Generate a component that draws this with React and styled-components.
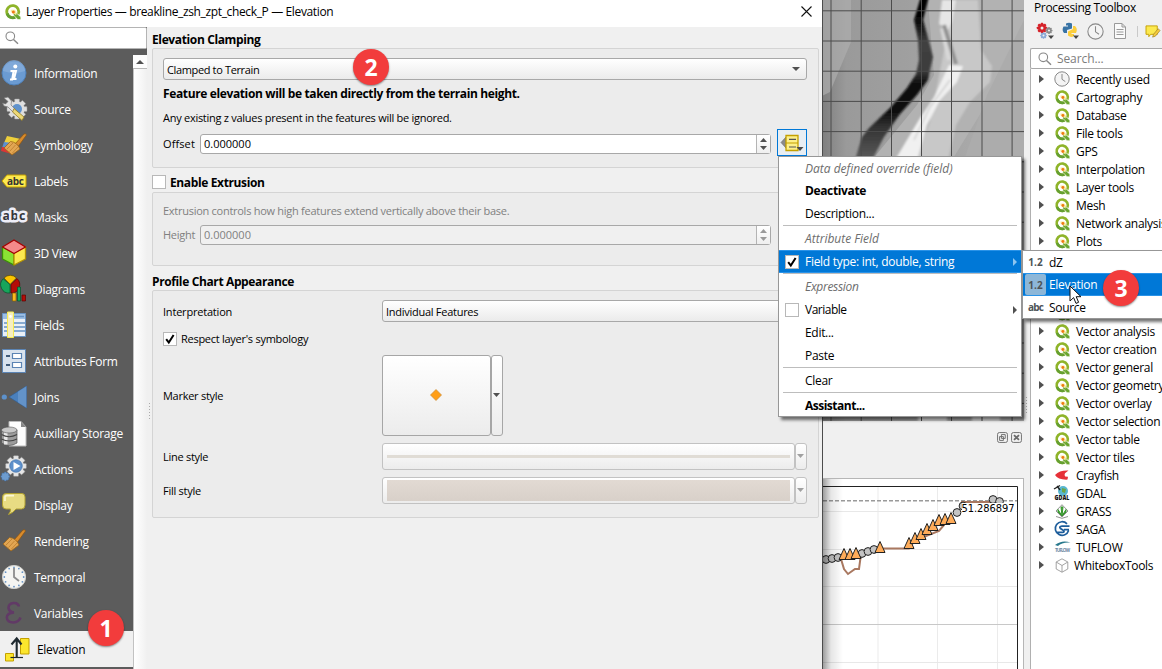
import React from "react";
import styled, { createGlobalStyle, css } from "styled-components";

const Global = createGlobalStyle`
  * { box-sizing: border-box; }
  body { margin: 0; overflow: hidden; background: #f0f0f0; }
  svg { flex: none; overflow: visible; }
`;

const Screen = styled.div`
  position: relative;
  display: flex;
  width: 1162px;
  height: 669px;
  overflow: hidden;
  background: #f0f0f0;
  color: #000;
  font: 12px/16px "Open Sans", "Noto Sans", sans-serif;
  white-space: nowrap;
`;

const Text = styled.span`
  display: block;
  flex: none;
  padding-top: ${(p) => p.$pt ?? 2}px;
  letter-spacing: ${(p) => p.$ls ?? -0.3}px;
  font-weight: ${(p) => (p.$bold ? 700 : 400)};
  font-style: ${(p) => (p.$italic ? "italic" : "normal")};
  color: ${(p) => p.$color || "inherit"};
`;
const TitleText = styled(Text)`
  padding-top: 0;
`;
const Heading = styled(Text)`
  font-weight: 700;
  letter-spacing: ${(p) => p.$ls ?? -0.37}px;
`;
const FormText = styled(Text)`
  width: ${(p) => (p.$w ? `${p.$w}px` : "auto")};
  padding-top: ${(p) => p.$pt ?? 1}px;
  font-size: 11px;
  letter-spacing: ${(p) => p.$ls ?? -0.27}px;
`;

/* ---------- dialog ---------- */
const Dialog = styled.section`
  display: flex;
  flex-direction: column;
  width: 823px;
  flex: none;
  border-right: 1px solid #4c4c4c;
`;
const TitleBar = styled.header`
  display: flex;
  align-items: center;
  height: 27px;
  flex: none;
  padding: 0 10px 4px 5px;
  background: #fff;
  gap: 5px;
`;
const Spacer = styled.div`flex: 1;`;
const DialogBody = styled.div`
  display: flex;
  flex: 1;
  min-height: 0;
`;
const Sidebar = styled.nav`
  display: flex;
  flex-direction: column;
  width: 147px;
  flex: none;
  background: #5c5c5c;
`;
const SideSearch = styled.div`
  display: flex;
  align-items: center;
  height: 22px;
  margin-bottom: 6px;
  padding-left: 5px;
  background: #fff;
  border: 1px solid #b4b4b4;
  border-left: 0;
  border-radius: 0 2px 2px 0;
`;
const SideMain = styled.div`
  display: flex;
  flex: 1;
`;
const SideList = styled.div`
  width: 133px;
  color: #fff;
`;
const SideItem = styled.div`
  display: flex;
  align-items: center;
  height: 36px;
  gap: ${(p) => (p.$active ? 7 : 6)}px;
  padding-left: ${(p) => (p.$active ? 2 : 0)}px;
  ${(p) => p.$active && css`background: #f0f0f0; color: #000;`}
`;
const ScrollTrack = styled.div`
  width: 14px;
  background: linear-gradient(90deg, #c2c2c2 0 1px, #fff 1px, #fbfbfb 5px, #f0f0f0 14px);
`;
const ScrollUp = styled.div`
  display: grid;
  place-items: center;
  height: 14px;
  background: #fdfdfd;
  border-bottom: 1px solid #b8b8b8;
`;
const Splitter = styled.div`
  align-self: flex-start;
  width: ${(p) => p.$w || 5}px;
  flex: none;
  height: 18px;
  margin-top: ${(p) => p.$top}px;
  background: radial-gradient(circle, #aaa 0.6px, transparent 1px) 0 0 / 5px 3px repeat-y;
`;
const Content = styled.main`
  display: flex;
  flex-direction: column;
  flex: 1;
  min-width: 0;
  padding-right: 3px;
`;
const GroupTitle = styled.div`
  display: flex;
  align-items: center;
  gap: 4px;
  height: ${(p) => p.$h}px;
  padding-top: ${(p) => p.$pt || 0}px;
`;
const Group = styled.div`
  height: ${(p) => p.$h}px;
  padding: 9px 11px 0 10px;
  background: #ececec;
  border: 1px solid #d4d4d4;
  border-radius: 2px;
  color: ${(p) => (p.$disabled ? "#808080" : "#000")};
`;
const Line = styled.div`
  display: flex;
  align-items: center;
  height: ${(p) => p.$h}px;
  gap: ${(p) => p.$gap ?? 5}px;
`;
const FormRow = styled.div`
  display: grid;
  grid-template-columns: 219px 1fr;
  align-items: center;
  margin-bottom: ${(p) => p.$mb || 0}px;
`;
const Combo = styled.div`
  display: flex;
  align-items: center;
  justify-content: space-between;
  height: 22px;
  padding: 0 6px 0 3px;
  background: linear-gradient(#fff, #ebebeb);
  border: 1px solid #a8a8a8;
  border-radius: 3px;
`;
const Spin = styled.div`
  display: flex;
  align-items: stretch;
  width: 571px;
  height: 20px;
  background: ${(p) => (p.$disabled ? "#f0f0f0" : "#fff")};
  border: 1px solid #a8a8a8;
  border-radius: 3px;
`;
const SpinValue = styled.div`
  display: flex;
  align-items: center;
  flex: 1;
  padding-left: 3px;
`;
const SpinButtons = styled.div`
  display: flex;
  flex-direction: column;
  align-items: center;
  justify-content: center;
  gap: 4px;
  width: 14px;
  border-left: 1px solid #b4b4b4;
  background: linear-gradient(#fff, #efefef);
`;
const OverrideButton = styled.div`
  display: grid;
  place-items: center;
  width: 30px;
  height: 27px;
  margin: -2px 0 0 1px;
  border: 1px solid #0078d7;
  background: #e8eef3;
`;
const Check = styled.span`
  display: grid;
  place-items: center;
  width: 14px;
  height: 14px;
  flex: none;
  background: #fff;
  border: 1px solid #b8b8b8;
`;
const SplitButton = styled.div`
  display: flex;
  height: ${(p) => p.$h}px;
`;
const ButtonFace = styled.div`
  display: flex;
  align-items: center;
  justify-content: center;
  width: ${(p) => p.$w}px;
  padding: ${(p) => (p.$pad ? "2px 4px" : "0 1px 1px 0")};
  border: 1px solid ${(p) => (p.$disabled ? "#c2c2c2" : "#a6a6a6")};
  border-radius: 3px;
  background: linear-gradient(#fff, #ececec);
`;
const Swatch = styled.div`
  width: 100%;
  height: ${(p) => p.$h}px;
  background: ${(p) => (p.$h > 4 ? "linear-gradient(#e2dad3, #d8d0c9)" : "#e0dcd5")};
`;

/* ---------- small glyphs ---------- */
const Tri = ({ dir = "down", color = "#505050", w = 8, h = 4 }) => {
  const d = { down: `M0 0H${w}L${w / 2} ${h}Z`, up: `M0 ${h}H${w}L${w / 2} 0Z`, right: `M0 0V${h}L${w} ${h / 2}Z` }[dir];
  return <svg width={w} height={h} display="block"><path d={d} fill={color} /></svg>;
};
const Tick = () => (
  <svg width="12" height="12" viewBox="0 0 12 12"><path d="M2.2 6.2 4.8 9.6 9.6 2" fill="none" stroke="#000" strokeWidth="2" /></svg>
);
const Magnifier = ({ color = "#888" }) => (
  <svg width="14" height="14" viewBox="0 0 14 14" fill="none" stroke={color} strokeWidth="1.1"><circle cx="5.3" cy="5.3" r="4.3" /><path d="M8.5 8.5 13 12.8" strokeWidth="1.5" /></svg>
);
const QLogo = ({ size = 15 }) => (
  <svg width={size} height={size} viewBox="0 0 16 16">
    <path d="M10.6 12.9A6 6 0 1 1 13.1 10.3" fill="none" stroke="#8fb42a" strokeWidth="2.8" />
    <path d="M2.2 9.5A6 6 0 0 0 10 13.4" fill="none" stroke="#649f31" strokeWidth="2.8" />
    <path d="M8.4 8.4H10.8L15.8 13V15.6H12.8L8.4 11Z" fill="#6aa52f" stroke="#fff" strokeWidth=".6" />
    <path d="M5.8 5.8H9.8L11.4 7.6V11.2L5.8 8Z" fill="#faeaa0" />
    <circle cx="8.4" cy="8" r="1.5" fill="#ee7913" />
  </svg>
);
const Gear = ({ x, y, r, fill, stroke }) => (
  <g transform={`translate(${x} ${y})`}>
    {[0, 45, 90, 135].map((a) => <rect key={a} x={-r * 0.24} y={-r} width={r * 0.48} height={2 * r} rx=".6" transform={`rotate(${a})`} fill={fill} stroke={stroke} strokeWidth=".5" />)}
    <circle r={r * 0.76} fill={fill} />
  </g>
);
const Clock = ({ size = 16 }) => (
  <svg width={size} height={size} viewBox="0 0 16 16" fill="#f4f4f4" stroke="#888" strokeWidth="1"><circle cx="8" cy="8" r="7.2" /><path d="M8 3V8.3L11.3 10.6" fill="none" /></svg>
);

const Brush = ({ x = 0, y = 0 }) => (
  <g transform={`translate(${x} ${y})`}>
    <path d="M14 12 23 2Q25 1 25.5 3L17.5 14Z" fill="#d98b2c" stroke="#8a5310" strokeWidth=".7" />
    <path d="M9.5 9.5Q16 10 19 17L11 23 3 16Z" fill="#e2a653" stroke="#9c6518" strokeWidth=".8" />
    <path d="M6 17 12 11M8.5 19.5 14.5 13M11 21.5 17 15" stroke="#bb7b2b" strokeWidth=".8" />
  </g>
);
const sideIcons = {
  Information: <><circle cx="14" cy="14" r="12" fill="#6b9bd2" stroke="#4f80b8" /><path d="M3 12A11 11 0 0 1 25 12Q14 16 3 12Z" fill="#8db2dd" opacity=".6" /><circle cx="15.3" cy="7.6" r="2" fill="#fff" /><path d="M10.5 12H16L14 20H16.5M10 20.5H12.2L13.6 12" fill="none" stroke="#fff" strokeWidth="2" /></>,
  Source: <><Gear x={17} y={14} r={10} fill="#dedede" stroke="#999" /><circle cx="17" cy="14" r="5" fill="#5f92cc" /><path d="M4 3 8 2 11.5 6 11 10 17 16 14.5 18.5 8 12 4 11 2.5 8 5.5 9 8 6.5Z" fill="#e4e4e4" stroke="#777" strokeWidth=".7" /><path d="M14 13.5 24 22 22 25.5 12.5 17Z" fill="#ecd878" stroke="#8f7a25" strokeWidth=".8" /></>,
  Symbology: <><path d="M7 5 21 8 18 15 4 12Z" fill="#edcf3b" /><path d="M4 11 13 12 12 18 2 17Z" fill="#5b90cf" /><path d="M2 16 13 17 12 23 1 20Z" fill="#db3535" /><Brush y={1} x={1} /></>,
  Labels: <><path d="M2 14 7 8H25Q26 8 26 9V19Q26 20 25 20H7Z" fill="#fce94f" stroke="#c4a000" /><text x="7" y="17.6" fontFamily="Open Sans" fontSize="10" fontWeight="700" textLength="17" fill="#333">abc</text></>,
  Masks: <text x="2.5" y="17" fontFamily="Open Sans" fontSize="12.5" fontWeight="700" textLength="23" fill="#33363b" stroke="#eeeef8" strokeWidth="5" paintOrder="stroke" strokeLinejoin="round">abc</text>,
  "3D View": <g strokeWidth="1.3" strokeLinejoin="round"><path d="M2.5 8 14 14V26L2.5 20Z" fill="#8ae234" stroke="#3b9005" /><path d="M25.5 8 14 14V26L25.5 20Z" fill="#fce94f" stroke="#b59304" /><path d="M14 1 25.5 8 14 14.5 2.5 8Z" fill="#f48a8a" stroke="#a40000" /></g>,
  Diagrams: <g strokeWidth=".7"><path d="M10 9.5 4 3A8.6 8.6 0 0 1 16.5 3Z" fill="#fbc500" stroke="#574700" /><path d="M10 9.5V18A8.3 8.3 0 0 1 3.2 3.8Z" fill="#17a55b" stroke="#07502a" /><path d="M11 9.5 17 3.6A8.3 8.3 0 0 1 11 18Z" fill="#b50d08" stroke="#5c0502" /><path d="M12.5 18H16V26H12.5Z" fill="#fbb920" stroke="#8a6300" /><path d="M17.5 12H20.5V26H17.5Z" fill="#11a65e" stroke="#07502a" /><path d="M22 20H25.5V26H22Z" fill="#b50d08" stroke="#5c0502" /></g>,
  Fields: <><path d="M2.5 2.5H25.5V25.5H2.5Z" fill="#eaf0f7" stroke="#6793c4" /><path d="M3 3H25V8H3Z" fill="#9dbfe4" /><path d="M4 12H25M4 16H25M4 20H25M14 5.5H24" stroke="#6793c4" strokeWidth="1.4" /><path d="M7.5 1H13.5V26.5H7.5Z" fill="#f5eec0" stroke="#f5ea52" /><circle cx="10.5" cy="5.5" r="1.4" fill="#fff" /></>,
  "Attributes Form": <><path d="M2.5 2.5H25.5V25.5H2.5Z" fill="#d9e3ee" stroke="#5b84b4" /><path d="M12.5 6.5H21.5V11.5H12.5ZM12.5 15.5H21.5V20.5H12.5Z" fill="#fff" stroke="#5b84b4" strokeWidth="1.2" /><path d="M6 9H10M6 18H10" stroke="#425c7a" strokeWidth="2" /></>,
  Joins: <><path d="M9 14 26.5 3V25Z" fill="#4a80bd" stroke="#2f5d92" strokeWidth=".6" /><path d="M18 8.4 26.5 3V25L18 19.5Z" fill="#78a3d4" opacity=".55" /><circle cx="4.3" cy="14" r="2.6" fill="#5d91cb" /></>,
  "Auxiliary Storage": <><path d="M9 2.5H21L26 8V27H9Z" fill="#fdfdfd" stroke="#bbb" /><path d="M21 2.5V8H26Z" fill="#888" /><path d="M1.5 11V24Q9 29 17 24V11Z" fill="#9c9c9c" stroke="#555" strokeWidth=".7" /><path d="M4 12.5V25.5H7.5V12.5Z" fill="#e8e8e8" /><path d="M1.5 15.5Q9 20 17 15.5M1.5 20Q9 24 17 20" fill="none" stroke="#444" strokeWidth="1.2" /><ellipse cx="9.2" cy="11" rx="7.8" ry="3" fill="#c9c9c9" stroke="#555" strokeWidth=".6" /></>,
  Actions: <><Gear x={16} y={11} r={10.3} fill="#e6e6e6" stroke="#999" /><circle cx="16" cy="11" r="6.3" fill="#5d90cb" stroke="#3e6ea8" strokeWidth=".6" /><path d="M13.5 7V15L20.5 11Z" fill="#fff" /><Gear x={5.3} y={21.5} r={4.4} fill="#6d9ccf" stroke="#3e6ea8" /></>,
  Display: <><path d="M6 2.5H22Q25 2.5 25 6V14Q25 18 21.5 18H16Q13 22 8.5 23.5 11 20.5 10.5 18H6Q2.5 18 2.5 14V6Q2.5 2.5 6 2.5Z" fill="#e8dc83" stroke="#b0a030" /><path d="M5 10V6Q5 4.6 7 4.6H14" fill="none" stroke="#fbf7d5" strokeWidth="1.6" /></>,
  Rendering: <Brush y={1} />,
  Temporal: <><circle cx="14" cy="14" r="11.6" fill="#f5f5f2" stroke="#d0d0cc" />{[...Array(12)].map((_, i) => <circle key={i} cx={14 + 9.7 * Math.sin(i * 0.5236)} cy={14 + 9.7 * Math.cos(i * 0.5236)} r=".9" fill="#6793c4" />)}<path d="M14 5V14L19 18" fill="none" stroke="#8d8d8d" strokeWidth="1.8" /></>,
  Variables: <path d="M19 7.5Q18 3.5 13.5 4 8.5 4.5 8.5 9 9 13 14 13.5 7 14 6.8 18.5 7.2 23.5 13.5 23.5 19 23 20.5 18.5" fill="none" stroke="#613a66" strokeWidth="2.6" />,
  Elevation: <><path d="M3.5 18.5H11.5V26H3.5Z" fill="#fce62d" stroke="#c4a000" /><path d="M18.5 3.5H27V19H18.5Z" fill="#fce62d" stroke="#c4a000" /><path d="M8.5 22.5H21" stroke="#1f2a30" strokeWidth="1.2" /><path d="M14.7 22V4M9.5 9.5 14.7 3.5 19.5 9.5" fill="none" stroke="#1f2a30" strokeWidth="2.1" /></>,
};
const SideIcon = ({ name }) => <svg width="28" height="28" viewBox="0 0 28 28">{sideIcons[name]}</svg>;

const OverrideIcon = () => (
  <svg width="24" height="20" viewBox="0 0 24 20">
    <path d="M1 9.5 6 4V15Z" fill="#8a8a8a" stroke="#666" strokeWidth=".6" />
    <path d="M6 2.5H18V17.5H6Z" fill="#fdf08a" stroke="#c4a000" strokeWidth="1.3" /><path d="M6 10H18" stroke="#c4a000" />
    <path d="M9 6.3H16M9 14H16" stroke="#555" strokeWidth="1.2" />
    <path d="M16.5 14H23.5L20 18Z" fill="#4a4a4a" />
  </svg>
);

/* ---------- map and profile ---------- */
const MiddleColumn = styled.section`
  display: flex;
  flex-direction: column;
  width: 201px;
  flex: none;
`;
const MapBox = styled.div`
  height: 421px;
  overflow: hidden;
`;
const MapSvg = styled.svg`
  display: block;
  overflow: hidden;
`;
const DockTitle = styled.div`
  display: flex;
  justify-content: flex-end;
  gap: 3px;
  height: 57px;
  padding: 11px 2px 0 0;
`;
const PlotBox = styled.div`
  height: 191px;
  overflow: hidden;
  background: #fff;
  border: 1px solid #b6b6b6;
  border-width: 1px 1px 0 0;
`;
const gridX = [8.5, 38.7, 69, 99, 129, 159.5, 189.6];
const gridY = [...Array(14)].map((_, i) => 10.8 + i * 30.2);
const MapView = () => (
  <MapSvg width="201" height="421" viewBox="1 0 201 421">
    <defs>
      <filter id="soft" x="-20%" y="-20%" width="140%" height="140%"><feGaussianBlur stdDeviation="1.2" /></filter>
      <linearGradient id="land" x1="0" x2="1"><stop offset="0" stopColor="#7e7e7e" /><stop offset=".12" stopColor="#9a9a9a" /><stop offset=".45" stopColor="#a0a0a0" /><stop offset="1" stopColor="#b0b0b0" /></linearGradient>
      <linearGradient id="channel" gradientUnits="userSpaceOnUse" x1="0" y1="0" x2="0" y2="157">
        <stop offset="0" stopColor="#000" /><stop offset=".13" stopColor="#080808" /><stop offset=".27" stopColor="#404040" /><stop offset=".45" stopColor="#3c3c3c" />
        <stop offset=".53" stopColor="#101010" /><stop offset=".7" stopColor="#0a0a0a" /><stop offset=".8" stopColor="#303030" /><stop offset="1" stopColor="#585858" />
      </linearGradient>
    </defs>
    <rect width="202" height="421" fill="url(#land)" />
    <path d="M0 0H29V42L8 92 0 96Z" fill="#aeaeae" opacity=".7" />
    <path d="M106 0H202V40L170 95 130 160H50L95 105 112 75Z" fill="#b2b2b2" />
    <path d="M202 20 165 95 142 160H202Z" fill="#acacac" />
    <g filter="url(#soft)">
      <path d="M132 0H156L159 50 170 66 168 82 148 102 134 125 126 160H92L108 122Z" fill="#c8c8c8" />
      <path d="M120 0H134L130 22 126 30 117 24Z" fill="#e6e6e6" />
      <path d="M120 28 127 60" stroke="#d8d8d8" strokeWidth="4" />
      <path d="M122 25 134 64" stroke="#929292" strokeWidth="4" />
      <path d="M127 65 141 66 135 82 118 100 105 125 95 160H73L98 118 112 97Z" fill="#f0f0f0" />
      <path d="M128 80 108 107 92 140" stroke="#d0d0d0" strokeWidth="1.5" fill="none" />
      <path d="M99-4H107L101 20 108 45 111 57 108 70 106 80 95 95 78 114 62 137 50 160H33L40 137 47 128 68 108 85 88 94 74 97 60 96 40 92 20Z" fill="url(#channel)" />
      <path d="M96 421V414H125V421ZM150 421V414H178V421Z" fill="#e8e8e8" />
    </g>
    {gridX.map((x) => <path key={x} d={`M${x + 0.5} 0V421`} stroke="#4c4c4c" />)}
    {gridY.map((y) => <path key={y} d={`M0 ${y}H202`} stroke="#4c4c4c" />)}
  </MapSvg>
);
const circles = [[3, 80.5], [9, 79.5], [15, 78.5], [39, 74.5], [45, 72.5], [51, 70.5], [134, 33.5], [140, 27], [170, 20.5], [176.5, 22.5]];
const triangles = [[21, 76], [27, 76], [33, 75], [57, 69], [86, 65], [92, 60], [98, 56], [104, 51], [110, 47], [116, 42], [122, 41], [128, 40]];
const Profile = () => (
  <svg width="200" height="190" display="block">
    <defs><linearGradient id="edge"><stop offset="0" stopColor="#000" stopOpacity=".38" /><stop offset=".4" stopColor="#000" stopOpacity=".1" /><stop offset="1" stopColor="#000" stopOpacity="0" /></linearGradient></defs>
    {[55, 114.5, 174.5].map((x) => <path key={x} d={`M${x} 8V190`} stroke="#ebebeb" />)}
    {[32.5, 70.5, 107.5, 183.5].map((y) => <path key={y} d={`M0 ${y}H194`} stroke="#e8e8e8" />)}
    <path d="M0 145.5H194" stroke="#c8c8c8" />
    <path d="M0 21.8H194" stroke="#9a9a9a" strokeWidth="1.4" strokeDasharray="4 2" />
    <path d="M0 7.5H194.5V190" fill="none" stroke="#222" />
    <path d="M18 80 21 90 25 95 32 90H36L38 75M57 69.5H86L92 61 103 57 116 52 121 46 122 41M138 23H170" fill="none" stroke="#a97860" strokeWidth="2" />
    {circles.map(([x, y]) => <circle key={x} cx={x} cy={y} r="3.9" fill="#c4c4c4" stroke="#222" />)}
    {triangles.map(([x, y]) => <path key={x} d={`M${x} ${y - 6.5}L${x + 5} ${y + 4.5}H${x - 5}Z`} fill="#ffac59" stroke="#222" />)}
    <path d="M139 24H193V36H139Z" fill="#fff" />
    <text x="138.5" y="33" fontFamily="DejaVu Sans Condensed, DejaVu Sans" fontSize="11" textLength="53" fill="#000">51.286897</text>
    <rect width="20" height="190" fill="url(#edge)" />
  </svg>
);
const DockButton = ({ close }) => (
  <svg width="11" height="11" viewBox="0 0 12 12" fill="none" stroke="#6a6a6a">
    <rect x=".6" y=".6" width="10.8" height="10.8" rx="2" />
    {close ? <path d="M3.3 3.3 8.7 8.7M8.7 3.3 3.3 8.7" strokeWidth="2" /> : <path d="M4.8 2.8H9V7H4.8ZM2.8 5H7V9.2H2.8Z" />}
  </svg>
);

/* ---------- toolbox ---------- */
const Toolbox = styled.aside`
  display: flex;
  flex-direction: column;
  flex: 1;
  min-width: 0;
  overflow: hidden;
`;
const ToolTitle = styled.div`
  height: 19px;
  padding: 0 4px;
  line-height: 15px;
`;
const ToolBar = styled.div`
  display: flex;
  align-items: center;
  height: 29px;
  padding: 0 0 5px 7px;
  gap: 8px;
`;
const ToolDivider = styled.i`
  width: 1px;
  height: 11px;
  flex: none;
  background: #c9c9c9;
`;
const ToolSearch = styled.div`
  display: flex;
  align-items: center;
  height: 21px;
  flex: none;
  gap: 5px;
  padding-left: 7px;
  background: #fff;
  border: 1px solid #a8a8a8;
  border-right: 0;
  border-radius: 2px 0 0 2px;
`;
const Tree = styled.div`
  flex: 1;
  padding-top: 1px;
  background: #fff;
  border-left: 1px solid #b0b0b0;
`;
const TreeRow = styled.div`
  display: flex;
  align-items: center;
  height: 18px;
  padding-left: 8px;
`;
const TreeIcon = styled.span`
  display: grid;
  place-items: center;
  width: 18px;
  margin: 0 ${(p) => (p.$tight ? 3 : 5)}px 0 9px;
  flex: none;
`;
const providerIcons = {
  clock: <Clock />,
  crayfish: <svg width="14" height="10" viewBox="0 0 14 10"><path d="M0 5Q5 0 13.5 .6L10 3.2Q9 5 10.2 6.5L13 6.8 12.5 9.6Q3 10 0 5Z" fill="#e63038" /></svg>,
  gdal: <svg width="16" height="16" viewBox="0 0 16 16"><circle cx="9" cy="6" r="5" fill="#59b7d0" /><path d="M8 3 12 4 11 8 8 7Z" fill="#6da544" /><path d="M0 4 6 .5M3 1 6 5" stroke="#222" strokeWidth="1.4" /><text x=".5" y="15" fontFamily="Open Sans" fontSize="7" fontWeight="800" textLength="15" lengthAdjust="spacingAndGlyphs" fill="#111">GDAL</text></svg>,
  grass: <svg width="14" height="15" viewBox="0 0 14 15"><path d="M7 .7 13 7 7 13 1 7ZM1 12.5 7 14.3 13 12.5" fill="none" stroke="#777" strokeWidth=".8" /><path d="M7 12 6 3H8ZM7 12 3 5.5V8ZM7 12 11 5.5V8Z" fill="#4bad3c" stroke="#35952c" strokeWidth="1" /></svg>,
  saga: <svg width="16" height="16" viewBox="0 0 16 16" fill="none" stroke="#1d5d9b" strokeWidth="1.7"><path d="M13 2.8A6.8 6.8 0 1 0 14.6 9.5M15.5 5.2H8Q4.5 5.6 6.5 7.6L9.5 9.4Q11 11.4 8.5 11.4H2.5M10 8.6H15" /></svg>,
  tuflow: <svg width="17" height="12" viewBox="0 0 17 12"><path d="M1 4Q8-1.5 16.5 1.5 8 .8 4 5Z" fill="#28788c" /><text x="1" y="10.5" fontFamily="Open Sans" fontSize="4.5" fontWeight="700" textLength="15" fill="#6b86a0">TUFLOW</text></svg>,
  whitebox: <svg width="14" height="15" viewBox="0 0 14 15" fill="none" stroke="#999" strokeWidth=".9"><path d="M7 .8 12.8 4V11L7 14.2 1.2 11V4ZM1.2 4 7 7.5 12.8 4M7 7.5V14.2" /></svg>,
};
const treeItems = [
  ["Recently used", "clock"], ["Cartography"], ["Database"], ["File tools"], ["GPS"], ["Interpolation"], ["Layer tools"], ["Mesh"], ["Network analysis"], ["Plots"],
  [""], [""], [""], [""],
  ["Vector analysis"], ["Vector creation"], ["Vector general"], ["Vector geometry"], ["Vector overlay"], ["Vector selection"], ["Vector table"], ["Vector tiles"],
  ["Crayfish", "crayfish"], ["GDAL", "gdal"], ["GRASS", "grass"], ["SAGA", "saga"], ["TUFLOW", "tuflow"], ["WhiteboxTools", "whitebox"],
];

/* ---------- menus and overlays ---------- */
const Menu = styled.div`
  position: absolute;
  left: ${(p) => p.$x}px;
  top: ${(p) => p.$y}px;
  width: ${(p) => p.$w}px;
  background: #fff;
  border: 1px solid #979797;
  box-shadow: 3px 3px 3px rgba(0, 0, 0, 0.55);
`;
const MenuRow = styled.div`
  display: flex;
  align-items: center;
  height: ${(p) => p.$h || 23}px;
  padding: 0 4px 0 6px;
  ${(p) => p.$active && css`background: #0078d7; color: #fff; box-shadow: inset 0 1px #2a93e8, inset 0 -1px #2a93e8;`}
`;
const MenuMark = styled.span`
  width: 20px;
  flex: none;
`;
const MenuSep = styled.div`
  height: 2px;
  margin: 0 4px;
  border-top: 1px solid #bdbdbd;
`;
const SubRow = styled(MenuRow)`
  padding: 0 0 0 2px;
`;
const TypeMark = styled.span`
  display: grid;
  place-items: center;
  width: 21px;
  height: 21px;
  margin-right: 3px;
  border-radius: 2px;
  font-size: 10px;
  font-weight: 700;
  letter-spacing: ${(p) => p.$ls || 0}px;
  color: #4d5357;
  background: ${(p) => (p.$active ? "#8db7d8" : "transparent")};
`;
const Badge = styled.div`
  position: absolute;
  left: ${(p) => p.$x}px;
  top: ${(p) => p.$y}px;
  display: grid;
  place-items: center;
  width: 36px;
  height: 36px;
  border-radius: 50%;
  background: #f23c3c;
  color: #fff;
  font: 700 23px/30px "Open Sans", sans-serif;
  box-shadow: 0 1px 2px rgba(0, 0, 0, 0.45);
`;
const Pointer = styled.svg`
  position: absolute;
  left: 1069px;
  top: 285px;
`;

const SpinBox = ({ disabled }) => (
  <Spin $disabled={disabled}>
    <SpinValue><FormText $pt={disabled ? 0 : 1} $ls={0}>0.000000</FormText></SpinValue>
    <SpinButtons><Tri dir="up" w={7} color={disabled ? "#9a9a9a" : "#505050"} /><Tri w={7} color={disabled ? "#9a9a9a" : "#505050"} /></SpinButtons>
  </Spin>
);

export default function App() {
  return (
    <Screen>
      <Global />
      <Dialog>
        <TitleBar>
          <QLogo size={16} />
          <TitleText $ls={-0.36}>Layer Properties — breakline_zsh_zpt_check_P — Elevation</TitleText>
          <Spacer />
          <svg width="11" height="11" viewBox="0 0 11 11"><path d="M.5.5 10.5 10.5M10.5.5.5 10.5" stroke="#111" strokeWidth="1.1" /></svg>
        </TitleBar>
        <DialogBody>
          <Sidebar>
            <SideSearch><Magnifier /></SideSearch>
            <SideMain>
              <SideList>
                {Object.keys(sideIcons).map((name) => (
                  <SideItem key={name} $active={name === "Elevation"}>
                    <SideIcon name={name} /><Text>{name}</Text>
                  </SideItem>
                ))}
              </SideList>
              <ScrollTrack><ScrollUp><Tri dir="up" /></ScrollUp></ScrollTrack>
            </SideMain>
          </Sidebar>
          <Splitter $top={375} />
          <Content>
            <GroupTitle $h={21} $pt={3}><Heading>Elevation Clamping</Heading></GroupTitle>
            <Group $h={120}>
              <Combo><FormText $pt={2} $ls={-0.36}>Clamped to Terrain</FormText><Tri /></Combo>
              <Line $h={26}><Heading>Feature elevation will be taken directly from the terrain height.</Heading></Line>
              <Line $h={24}><FormText $pt={0}>Any existing z values present in the features will be ignored.</FormText></Line>
              <Line $h={27}><FormText $w={32} $ls={0.1}>Offset</FormText><SpinBox /><OverrideButton><OverrideIcon /></OverrideButton></Line>
            </Group>
            <GroupTitle $h={24} $pt={4}><Check /><Heading>Enable Extrusion</Heading></GroupTitle>
            <Group $h={74} $disabled>
              <Line $h={17}><FormText $pt={0}>Extrusion controls how high features extend vertically above their base.</FormText></Line>
              <Line $h={32}><FormText $pt={0} $w={32}>Height</FormText><SpinBox disabled /></Line>
            </Group>
            <GroupTitle $h={24} $pt={6}><Heading>Profile Chart Appearance</Heading></GroupTitle>
            <Group $h={228}>
              <FormRow $mb={5}><FormText $pt={2} $ls={-0.2}>Interpretation</FormText><Combo><FormText $pt={2}>Individual Features</FormText><Tri /></Combo></FormRow>
              <Line $h={24} $gap={4}><Check><Tick /></Check><FormText $pt={0}>Respect layer's symbology</FormText></Line>
              <Line $h={4} />
              <FormRow $mb={7}>
                <FormText>Marker style</FormText>
                <SplitButton $h={81}>
                  <ButtonFace $w={109}><svg width="12" height="12"><path d="M6 .5 11.5 6 6 11.5.5 6Z" fill="#ff9e17" stroke="#c98a35" strokeWidth=".7" /></svg></ButtonFace>
                  <ButtonFace $w={12}><Tri w={7} /></ButtonFace>
                </SplitButton>
              </FormRow>
              <FormRow $mb={7}>
                <FormText>Line style</FormText>
                <SplitButton $h={27}><ButtonFace $w={413} $pad $disabled><Swatch $h={3} /></ButtonFace><ButtonFace $w={12} $disabled><Tri w={7} color="#a0a0a0" /></ButtonFace></SplitButton>
              </FormRow>
              <FormRow>
                <FormText>Fill style</FormText>
                <SplitButton $h={27}><ButtonFace $w={413} $pad $disabled><Swatch $h={21} /></ButtonFace><ButtonFace $w={12} $disabled><Tri w={7} color="#a0a0a0" /></ButtonFace></SplitButton>
              </FormRow>
            </Group>
          </Content>
        </DialogBody>
      </Dialog>

      <MiddleColumn>
        <MapBox><MapView /></MapBox>
        <DockTitle><DockButton /><DockButton close /></DockTitle>
        <PlotBox><Profile /></PlotBox>
      </MiddleColumn>
      <Splitter $top={396} $w={6} />

      <Toolbox>
        <ToolTitle><TitleText $ls={-0.35}>Processing Toolbox</TitleText></ToolTitle>
        <ToolBar>
          <svg width="17" height="18" viewBox="1 0 17 18"><Gear x={6} y={6} r={5.2} fill="#d5222a" /><circle cx="6" cy="6" r="1.5" fill="#f0f0f0" /><Gear x={13} y={8.5} r={3.5} fill="#8b8b8b" /><circle cx="13" cy="8.5" r="1" fill="#f0f0f0" /><Gear x={7.5} y={13.5} r={3.3} fill="#8aa9d6" /><circle cx="7.5" cy="13.5" r="1" fill="#f0f0f0" /><path d="M12 13.5H18L15 17Z" fill="#444" /></svg>
          <svg width="17" height="18" viewBox="0 0 17 18"><path d="M4 1.5Q7 0 10 1.5V6.5L5 8V11H2Q-.5 8 1.5 4.5H6V3.5H4Z" fill="#3873a5" /><path d="M6 13.5V9.5L11 7V4H13Q16 6.5 14 11H9.5V12H12V14Q9 16 6 13.5Z" fill="#fbce3e" /><path d="M11 13.5H17L14 17Z" fill="#444" /></svg>
          <Clock size={17} />
          <svg width="17" height="16" viewBox="0 0 17 16" fill="#fafafa" stroke="#999"><path d="M2.5.5H10L13.5 4V15.5H2.5ZM10 .5V4H13.5" /><path d="M4.5 6.5H11.5M4.5 9H11.5M4.5 11.5H11.5" /></svg>
          <ToolDivider />
          <svg width="15" height="15" viewBox="1 0 16 16"><path d="M1 2H13V11H6L4 13.5V11H1Z" fill="#fce94f" stroke="#c4a000" /><path d="M8 14 9 11 14 5 16 7 11 13Z" fill="#f5c93c" stroke="#8a7320" strokeWidth=".6" /></svg>
        </ToolBar>
        <ToolSearch><Magnifier /><Text $color="#7d7d7d" $ls={-0.1} $pt={1}>Search...</Text></ToolSearch>
        <Tree>
          {treeItems.map(([name, icon], i) => (
            <TreeRow key={i}>
              <Tri dir="right" w={5} h={8} />
              <TreeIcon $tight={icon === "whitebox"}>{icon ? providerIcons[icon] : <QLogo />}</TreeIcon>
              <Text>{name}</Text>
            </TreeRow>
          ))}
        </Tree>
      </Toolbox>

      <Menu $x={778} $y={156} $w={244}>
        <MenuRow $h={22}><MenuMark /><Text $italic $ls={0} $color="#6d6d6d">Data defined override (field)</Text></MenuRow>
        <MenuRow><MenuMark /><Heading $pt={1}>Deactivate</Heading></MenuRow>
        <MenuRow><MenuMark /><Text $pt={1}>Description...</Text></MenuRow>
        <MenuSep />
        <MenuRow><MenuMark /><Text $pt={1} $italic $ls={0} $color="#6d6d6d">Attribute Field</Text></MenuRow>
        <MenuRow $active><MenuMark><Check><Tick /></Check></MenuMark><Text $pt={1} $ls={-0.28}>Field type: int, double, string</Text><Spacer /><Tri dir="right" w={4} h={8} color="#8cc4f0" /></MenuRow>
        <MenuSep />
        <MenuRow><MenuMark /><Text $pt={1} $italic $color="#6d6d6d">Expression</Text></MenuRow>
        <MenuRow><MenuMark><Check /></MenuMark><Text $pt={1} $ls={-0.5}>Variable</Text><Spacer /><Tri dir="right" w={4} h={8} /></MenuRow>
        <MenuRow><MenuMark /><Text $pt={1}>Edit...</Text></MenuRow>
        <MenuRow><MenuMark /><Text $pt={1}>Paste</Text></MenuRow>
        <MenuSep />
        <MenuRow><MenuMark /><Text $pt={1}>Clear</Text></MenuRow>
        <MenuSep />
        <MenuRow $h={22}><MenuMark /><Heading $ls={-0.5}>Assistant...</Heading></MenuRow>
      </Menu>
      <Menu $x={1022} $y={250} $w={150}>
        <SubRow $h={22}><TypeMark>1.2</TypeMark><Text>dZ</Text></SubRow>
        <SubRow $active><TypeMark $active>1.2</TypeMark><Text $pt={1}>Elevation</Text></SubRow>
        <SubRow $h={22}><TypeMark $ls={-0.8}>abc</TypeMark><Text>Source</Text></SubRow>
      </Menu>

      <Badge $x={88} $y={610}>1</Badge>
      <Badge $x={353} $y={49}>2</Badge>
      <Badge $x={1103} $y={270}>3</Badge>
      <Pointer width="14" height="20" viewBox="0 0 14 20"><path d="M1 1V16L4.6 12.6 7 18.4 9.6 17.3 7.2 11.7H12Z" fill="#fff" stroke="#111" /></Pointer>
    </Screen>
  );
}
